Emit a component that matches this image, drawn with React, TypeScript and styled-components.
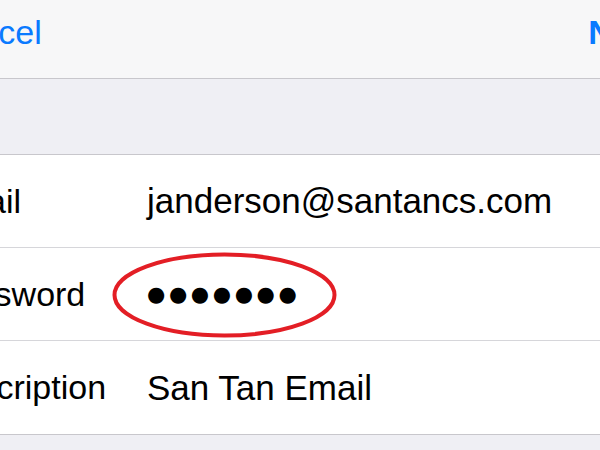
import React from 'react'
import styled, { createGlobalStyle } from 'styled-components'

const GlobalStyle = createGlobalStyle`
body{
    margin: 0;
    background-color: #efeff4;
    overflow: hidden;
    font-family: "Liberation Sans", Arial, sans-serif;
}
`

type Field = {
    label: string;
    value: string;
    secret?: boolean;
}

const fields: Field[] = [
    { label: 'Email', value: 'janderson@santancs.com' },
    { label: 'Password', value: '●●●●●●●', secret: true },
    { label: 'Description', value: 'San Tan Email' },
]

const App: React.FC = () => {
    return (
        <Screen>
            <GlobalStyle />
            <Content>
                <NavBar>
                    <NavButton>Cancel</NavButton>
                    <NavButton $bold>Next</NavButton>
                </NavBar>
                <Spacer />
                <Group>
                    {fields.map((field) => (
                        <Row key={field.label}>
                            <Label>{field.label}</Label>
                            <ValueCell>
                                {field.secret ? <Dots>{field.value}</Dots> : <Value>{field.value}</Value>}
                                {field.secret ? (
                                    <Circle viewBox="0 0 225 86">
                                        <ellipse cx="112.5" cy="43" rx="110" ry="40.5" fill="none" stroke="#e31e25" strokeWidth="4" />
                                    </Circle>
                                ) : null}
                            </ValueCell>
                        </Row>
                    ))}
                </Group>
            </Content>
        </Screen>
    )
}

export default App

const Screen = styled.div`
width: 600px;
height: 450px;
overflow: hidden;
background-color: #efeff4;
`

const Content = styled.div`
margin-left: -64px;
width: 760px;
`

const NavBar = styled.div`
display: flex;
align-items: flex-start;
height: 66px;
padding: 12px 34px 0 0;
background-color: #f7f7f8;
border-bottom: 1px solid #c8c7cc;
`

const NavButton = styled.div<{ $bold?: boolean }>`
font-size: 34px;
line-height: 40px;
color: #0a7aff;
font-weight: ${(p) => (p.$bold ? 600 : 400)};
&:last-child{
    margin-left: auto;
}
`

const Spacer = styled.div`
height: 75px;
`

const Group = styled.div`
background-color: #fff;
border-top: 1px solid #c8c7cc;
border-bottom: 1px solid #c8c7cc;
`

const Row = styled.div`
display: grid;
grid-template-columns: 211px 1fr;
align-items: center;
height: 92px;
border-bottom: 1px solid #d6d6da;
&:last-child{
    height: 93px;
    border-bottom: none;
}
`

const Label = styled.div`
font-size: 34px;
color: #000;
`

const ValueCell = styled.div`
position: relative;
height: 100%;
display: flex;
align-items: center;
`

const Value = styled.div`
font-size: 35px;
color: #000;
`

const Dots = styled.div`
font-family: "DejaVu Sans", sans-serif;
font-size: 21px;
letter-spacing: 3.6px;
color: #000;
`

const Circle = styled.svg`
position: absolute;
left: -35px;
top: 4px;
width: 225px;
height: 86px;
`
